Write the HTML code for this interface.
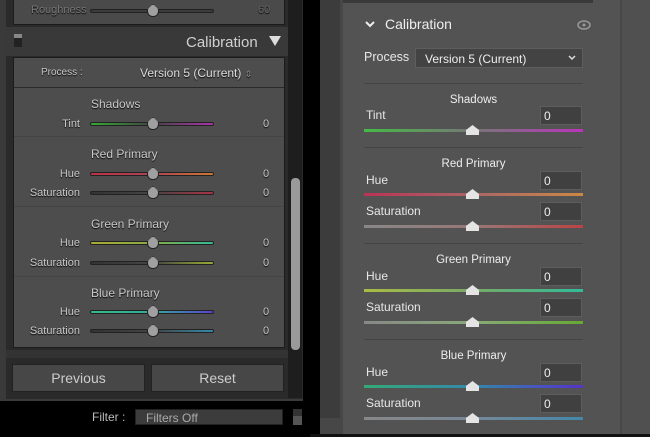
<!DOCTYPE html><html><head><style>
*{margin:0;padding:0;box-sizing:border-box}
body{width:650px;height:437px;background:#000;position:relative;overflow:hidden;font-family:"Liberation Sans",sans-serif}
.a{position:absolute}
.lt{color:#c8c8c8;font-size:11px;text-shadow:0 1px 1px #000}
.ls{position:absolute;left:90px;width:124px;height:4px;border-radius:2px;border:1px solid #222}
.lth{position:absolute;width:12px;height:13px;background:#a0a0a0;border:1px solid #222;border-radius:50% 50% 45% 45%;clip-path:polygon(50% 0,100% 45%,100% 100%,0 100%,0 45%);}
.rl{color:#e8e8e8;font-size:12px}
.box{position:absolute;left:540px;width:42px;height:19px;background:#404040;border:1px solid #5d5d5d;color:#eee;font-size:12px;padding:2px 0 0 3px}
.rs{position:absolute;left:364px;width:219px;height:3px}
.rth{position:absolute;width:13px;height:10px;background:#e4e4e4;clip-path:polygon(50% 0,100% 50%,100% 100%,0 100%,0 50%)}
.sep{position:absolute;left:364px;width:219px;height:1px;background:#444}
.ctr{position:absolute;left:364px;width:219px;text-align:center;color:#eee;font-size:12px}
</style></head><body>
<div class="a" style="left:0;top:0;width:303px;height:400px;background:#2a2a2a"></div>
<div class="a" style="left:0;top:0;width:6px;height:400px;background:#3a3a3a"></div>
<div class="a" style="left:13px;top:0;width:272px;height:25px;background:#4a4a4a;border:1px solid #1c1c1c;border-top:none"></div>
<div class="a lt" style="left:31px;top:4px;color:#777">Roughness</div>
<div class="ls" style="top:9px;background:#3c3c3c"></div>
<div class="lth" style="left:147px;top:4px"></div>
<div class="a lt" style="left:258px;top:4px;color:#666">60</div>
<div class="a" style="left:6px;top:27px;width:282px;height:29px;background:#393939"></div>
<div class="a" style="left:14px;top:34px;width:8px;height:13px;background:#222;border-top:4px solid #888"></div>
<div class="a" style="left:186px;top:34px;color:#d0d0d0;font-size:15px">Calibration</div>
<div class="a" style="left:269px;top:36px;width:0;height:0;border-left:6px solid transparent;border-right:6px solid transparent;border-top:10px solid #ddd"></div>
<div class="a" style="left:13px;top:57px;width:272px;height:291px;background:#4d4d4d;border:1px solid #1c1c1c"></div>
<div class="a" style="left:14px;top:87px;width:270px;height:1px;background:#2a2a2a"></div>
<div class="a lt" style="left:41px;top:67px;font-size:10px">Process :</div>
<div class="a lt" style="left:140px;top:66px;font-size:12px;color:#ddd">Version 5 (Current) <span style="color:#888;font-size:9px">⇕</span></div>
<div class="a" style="left:14px;top:136px;width:270px;height:1px;background:#444"></div>
<div class="a" style="left:14px;top:206px;width:270px;height:1px;background:#444"></div>
<div class="a" style="left:14px;top:276px;width:270px;height:1px;background:#444"></div>
<div class="a lt" style="left:91px;top:97px;font-size:12px">Shadows</div>
<div class="a lt" style="left:91px;top:147px;font-size:12px">Red Primary</div>
<div class="a lt" style="left:91px;top:217px;font-size:12px">Green Primary</div>
<div class="a lt" style="left:91px;top:286px;font-size:12px">Blue Primary</div>
<div class="a lt" style="left:0;width:80px;text-align:right;top:118px">Tint</div>
<div class="a lt" style="left:0;width:80px;text-align:right;top:168px">Hue</div>
<div class="a lt" style="left:0;width:80px;text-align:right;top:187px">Saturation</div>
<div class="a lt" style="left:0;width:80px;text-align:right;top:237px">Hue</div>
<div class="a lt" style="left:0;width:80px;text-align:right;top:257px">Saturation</div>
<div class="a lt" style="left:0;width:80px;text-align:right;top:306px">Hue</div>
<div class="a lt" style="left:0;width:80px;text-align:right;top:325px">Saturation</div>
<div class="ls" style="top:122px;background:linear-gradient(90deg,#3a3,#444 50%,#a3a)"></div>
<div class="ls" style="top:172px;background:linear-gradient(90deg,#b34,#a45 50%,#c73)"></div>
<div class="ls" style="top:191px;background:linear-gradient(90deg,#333,#444 50%,#a34)"></div>
<div class="ls" style="top:241px;background:linear-gradient(90deg,#aa3,#8a4 50%,#3b9)"></div>
<div class="ls" style="top:261px;background:linear-gradient(90deg,#333,#444 50%,#9a3)"></div>
<div class="ls" style="top:310px;background:linear-gradient(90deg,#3b8,#3a9 50%,#54c)"></div>
<div class="ls" style="top:329px;background:linear-gradient(90deg,#333,#444 50%,#38a)"></div>
<div class="lth" style="left:147px;top:117px"></div>
<div class="lth" style="left:147px;top:167px"></div>
<div class="lth" style="left:147px;top:186px"></div>
<div class="lth" style="left:147px;top:236px"></div>
<div class="lth" style="left:147px;top:256px"></div>
<div class="lth" style="left:147px;top:305px"></div>
<div class="lth" style="left:147px;top:324px"></div>
<div class="a lt" style="left:263px;top:118px">0</div>
<div class="a lt" style="left:263px;top:168px">0</div>
<div class="a lt" style="left:263px;top:187px">0</div>
<div class="a lt" style="left:263px;top:237px">0</div>
<div class="a lt" style="left:263px;top:257px">0</div>
<div class="a lt" style="left:263px;top:306px">0</div>
<div class="a lt" style="left:263px;top:325px">0</div>
<div class="a" style="left:6px;top:350px;width:282px;height:8px;background:#333"></div>
<div class="a" style="left:12px;top:364px;width:133px;height:28px;background:#474747;border:1px solid #222;color:#ccc;font-size:14px;text-align:center;line-height:26px">Previous</div>
<div class="a" style="left:151px;top:364px;width:133px;height:28px;background:#474747;border:1px solid #222;color:#ccc;font-size:14px;text-align:center;line-height:26px">Reset</div>
<div class="a" style="left:288px;top:0;width:14px;height:398px;background:#1e1e1e"></div>
<div class="a" style="left:291px;top:178px;width:9px;height:172px;background:#9a9a9a;border-radius:4px"></div>
<div class="a" style="left:0;top:399px;width:303px;height:2px;background:#3a3a3a"></div>
<div class="a lt" style="left:92px;top:410px;font-size:12px;color:#bbb">Filter :</div>
<div class="a" style="left:135px;top:409px;width:148px;height:16px;background:#3c3c3c;border:1px solid #222;color:#aaa;font-size:12px;padding:1px 0 0 10px">Filters Off</div>
<div class="a" style="left:293px;top:409px;width:9px;height:16px;background:#555;border-top:7px solid #333"></div>
<div class="a" style="left:320px;top:0;width:20px;height:437px;background:#3c3c3c"></div>
<div class="a" style="left:320px;top:418px;width:20px;height:19px;background:#474747"></div>
<div class="a" style="left:340px;top:0;width:310px;height:437px;background:#535353"></div>
<div class="a" style="left:340px;top:0;width:3px;height:437px;background:#474747"></div>
<div class="a" style="left:343px;top:0;width:250px;height:3px;background:#3a3a3a"></div>
<div class="a" style="left:620px;top:0;width:2px;height:437px;background:#484848"></div>
<div class="a" style="left:622px;top:0;width:28px;height:437px;background:#505050"></div>
<div class="a" style="left:310px;top:434px;width:340px;height:3px;background:#111"></div>
<svg class="a" style="left:364px;top:19px" width="12" height="10"><path d="M2 3 L6 7 L10 3" stroke="#eee" stroke-width="2" fill="none"/></svg>
<div class="a" style="left:385px;top:16px;color:#eee;font-size:14px">Calibration</div>
<svg class="a" style="left:577px;top:19px" width="14" height="12"><ellipse cx="7" cy="6" rx="6" ry="4" stroke="#999" stroke-width="1.5" fill="none"/><circle cx="7" cy="6" r="1.5" fill="#999"/></svg>
<div class="a rl" style="left:364px;top:50px;font-size:12.5px">Process</div>
<div class="a" style="left:415px;top:48px;width:168px;height:20px;background:#434343;border:1px solid #5d5d5d;color:#eee;font-size:12px;padding:3px 0 0 9px">Version 5 (Current)</div>
<svg class="a" style="left:567px;top:54px" width="10" height="8"><path d="M2 2 L5 5 L8 2" stroke="#ddd" stroke-width="1.5" fill="none"/></svg>
<div class="sep" style="top:83px"></div>
<div class="sep" style="top:147px"></div>
<div class="sep" style="top:243px"></div>
<div class="sep" style="top:339px"></div>
<div class="ctr" style="top:94px;font-size:11.5px">Shadows</div>
<div class="ctr" style="top:158px;font-size:11.5px">Red Primary</div>
<div class="ctr" style="top:254px;font-size:11.5px">Green Primary</div>
<div class="ctr" style="top:350px;font-size:11.5px">Blue Primary</div>
<div class="a rl" style="left:366px;top:108px">Tint</div>
<div class="a rl" style="left:366px;top:173px">Hue</div>
<div class="a rl" style="left:366px;top:204px">Saturation</div>
<div class="a rl" style="left:366px;top:269px">Hue</div>
<div class="a rl" style="left:366px;top:300px">Saturation</div>
<div class="a rl" style="left:366px;top:365px">Hue</div>
<div class="a rl" style="left:366px;top:396px">Saturation</div>
<div class="box" style="top:106px">0</div>
<div class="box" style="top:171px">0</div>
<div class="box" style="top:202px">0</div>
<div class="box" style="top:267px">0</div>
<div class="box" style="top:298px">0</div>
<div class="box" style="top:363px">0</div>
<div class="box" style="top:394px">0</div>
<div class="rs" style="top:129px;background:linear-gradient(90deg,#4b4,#777 50%,#b3b)"></div>
<div class="rs" style="top:193px;background:linear-gradient(90deg,#b35,#a66 50%,#c84)"></div>
<div class="rs" style="top:225px;background:linear-gradient(90deg,#888,#977 50%,#b44)"></div>
<div class="rs" style="top:289px;background:linear-gradient(90deg,#ab4,#7a6 50%,#3b9)"></div>
<div class="rs" style="top:321px;background:linear-gradient(90deg,#888,#8a7 50%,#6a3)"></div>
<div class="rs" style="top:385px;background:linear-gradient(90deg,#3a7,#38a 50%,#53c)"></div>
<div class="rs" style="top:417px;background:linear-gradient(90deg,#888,#789 50%,#48a)"></div>
<div class="rth" style="left:466px;top:125px"></div>
<div class="rth" style="left:466px;top:189px"></div>
<div class="rth" style="left:466px;top:221px"></div>
<div class="rth" style="left:466px;top:285px"></div>
<div class="rth" style="left:466px;top:317px"></div>
<div class="rth" style="left:466px;top:381px"></div>
<div class="rth" style="left:466px;top:413px"></div>
</body></html>
